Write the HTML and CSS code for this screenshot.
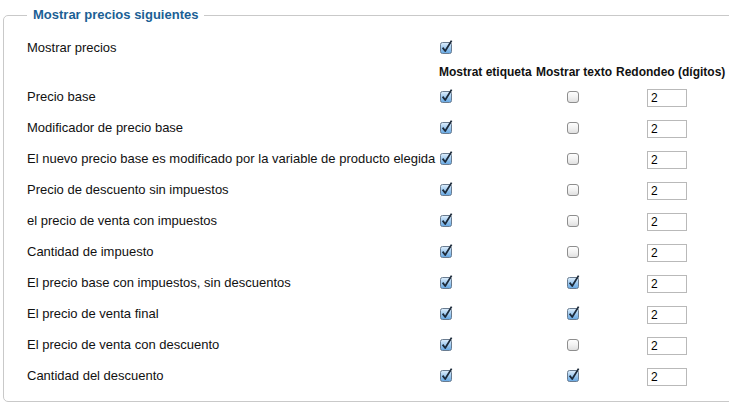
FILE: index.html
```html
<!DOCTYPE html>
<html lang="es">
<head>
<meta charset="utf-8">
<title>Mostrar precios siguientes</title>
<link rel="stylesheet" href="styles.css">
</head>
<body>
<svg width="0" height="0" class="defs" aria-hidden="true">
  <defs>
    <linearGradient id="gOn" x1="0" y1="0" x2="0" y2="1">
      <stop offset="0" stop-color="#e0effc"/>
      <stop offset="0.5" stop-color="#9fcaf0"/>
      <stop offset="1" stop-color="#64a6e2"/>
    </linearGradient>
    <linearGradient id="gOff" x1="0" y1="0" x2="0" y2="1">
      <stop offset="0" stop-color="#ffffff"/>
      <stop offset="0.5" stop-color="#f2f2f2"/>
      <stop offset="1" stop-color="#dedede"/>
    </linearGradient>
    <symbol id="cbOn" viewBox="0 0 14 14">
      <rect x="1.5" y="2.5" width="11" height="11" rx="2" fill="url(#gOn)" stroke="#6a7c90"/>
      <path d="M3.6 7.6 L6.2 11 L12.6 0.6" fill="none" stroke="#1c2a3a" stroke-width="1.8" stroke-linejoin="round"/>
    </symbol>
    <symbol id="cbOff" viewBox="0 0 14 14">
      <rect x="1.5" y="2.5" width="11" height="11" rx="2.5" fill="url(#gOff)" stroke="#8e8e8e"/>
    </symbol>
  </defs>
</svg>
<fieldset class="box">
  <legend class="box-title">Mostrar precios siguientes</legend>
  <table class="grid">
    <tr class="row">
      <td class="label">Mostrar precios</td>
      <td class="c1"><svg class="cb"><use href="#cbOn"/></svg></td>
      <td class="c2"></td>
      <td class="c3"></td>
    </tr>
    <tr class="head">
      <td class="label"></td>
      <th class="h1">Mostrat etiqueta</th>
      <th class="h2">Mostrar texto</th>
      <th class="h3">Redondeo (dígitos)</th>
    </tr>
    <tr class="row">
      <td class="label">Precio base</td>
      <td class="c1"><svg class="cb"><use href="#cbOn"/></svg></td>
      <td class="c2"><svg class="cb"><use href="#cbOff"/></svg></td>
      <td class="c3"><input class="num" type="text" value="2"></td>
    </tr>
    <tr class="row">
      <td class="label">Modificador de precio base</td>
      <td class="c1"><svg class="cb"><use href="#cbOn"/></svg></td>
      <td class="c2"><svg class="cb"><use href="#cbOff"/></svg></td>
      <td class="c3"><input class="num" type="text" value="2"></td>
    </tr>
    <tr class="row">
      <td class="label">El nuevo precio base es modificado por la variable de producto elegida</td>
      <td class="c1"><svg class="cb"><use href="#cbOn"/></svg></td>
      <td class="c2"><svg class="cb"><use href="#cbOff"/></svg></td>
      <td class="c3"><input class="num" type="text" value="2"></td>
    </tr>
    <tr class="row">
      <td class="label">Precio de descuento sin impuestos</td>
      <td class="c1"><svg class="cb"><use href="#cbOn"/></svg></td>
      <td class="c2"><svg class="cb"><use href="#cbOff"/></svg></td>
      <td class="c3"><input class="num" type="text" value="2"></td>
    </tr>
    <tr class="row">
      <td class="label">el precio de venta con impuestos</td>
      <td class="c1"><svg class="cb"><use href="#cbOn"/></svg></td>
      <td class="c2"><svg class="cb"><use href="#cbOff"/></svg></td>
      <td class="c3"><input class="num" type="text" value="2"></td>
    </tr>
    <tr class="row">
      <td class="label">Cantidad de impuesto</td>
      <td class="c1"><svg class="cb"><use href="#cbOn"/></svg></td>
      <td class="c2"><svg class="cb"><use href="#cbOff"/></svg></td>
      <td class="c3"><input class="num" type="text" value="2"></td>
    </tr>
    <tr class="row">
      <td class="label">El precio base con impuestos, sin descuentos</td>
      <td class="c1"><svg class="cb"><use href="#cbOn"/></svg></td>
      <td class="c2"><svg class="cb"><use href="#cbOn"/></svg></td>
      <td class="c3"><input class="num" type="text" value="2"></td>
    </tr>
    <tr class="row">
      <td class="label">El precio de venta final</td>
      <td class="c1"><svg class="cb"><use href="#cbOn"/></svg></td>
      <td class="c2"><svg class="cb"><use href="#cbOn"/></svg></td>
      <td class="c3"><input class="num" type="text" value="2"></td>
    </tr>
    <tr class="row">
      <td class="label">El precio de venta con descuento</td>
      <td class="c1"><svg class="cb"><use href="#cbOn"/></svg></td>
      <td class="c2"><svg class="cb"><use href="#cbOff"/></svg></td>
      <td class="c3"><input class="num" type="text" value="2"></td>
    </tr>
    <tr class="row">
      <td class="label">Cantidad del descuento</td>
      <td class="c1"><svg class="cb"><use href="#cbOn"/></svg></td>
      <td class="c2"><svg class="cb"><use href="#cbOn"/></svg></td>
      <td class="c3"><input class="num" type="text" value="2"></td>
    </tr>
  </table>
</fieldset>
</body>
</html>
```
FILE: styles.css
```css
html, body {
  margin: 0;
  padding: 0;
  background: #ffffff;
  overflow: hidden;
}
body {
  width: 729px;
  height: 411px;
  font-family: "Liberation Sans", Arial, sans-serif;
  font-size: 13px;
  color: #111;
}
.defs {
  position: absolute;
  width: 0;
  height: 0;
}
.box {
  margin: 7px 0 0 3px;
  padding: 9px 0 10px 23px;
  width: 760px;
  border: 1px solid #c9c9c9;
  border-radius: 5px;
  box-sizing: border-box;
  min-width: 0;
}
.box-title {
  padding: 0 6px;
  font-size: 13px;
  font-weight: bold;
  line-height: 16px;
  color: #1b5f95;
}
.grid {
  border-collapse: collapse;
  border-spacing: 0;
  table-layout: fixed;
}
.grid td, .grid th {
  padding: 0;
  vertical-align: middle;
}
.label {
  width: 410px;
  white-space: nowrap;
}
.row {
  height: 31px;
}
.head {
  height: 18px;
}
.head th {
  font-size: 12px;
  font-weight: bold;
  text-align: left;
  white-space: nowrap;
  line-height: 14px;
}
.h1, .c1 { width: 96px; padding-left: 2px !important; }
.h2, .c2 { width: 78px; padding-left: 1px !important; }
.h3, .c3 { width: 110px; padding-left: 2px !important; }
.c1 { text-align: left; }
.c2 { text-align: left; }
.c2 .cb { margin-left: 30px; }
.cb {
  display: block;
  width: 14px;
  height: 14px;
  margin-top: -2px;
}
.c3 { text-align: left; }
.num {
  display: block;
  margin-left: 31px;
  margin-top: 2px;
  width: 40px;
  height: 18px;
  box-sizing: border-box;
  border: 1px solid #b9b9b9;
  padding: 0 3px;
  font-family: "Liberation Sans", Arial, sans-serif;
  font-size: 12px;
  color: #000;
  background: #fff;
  outline: none;
}
```
